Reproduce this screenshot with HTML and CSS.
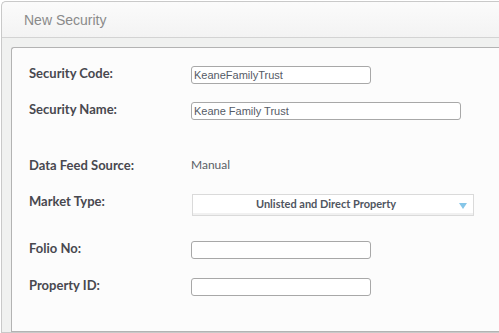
FILE: index.html
```html
<!DOCTYPE html>
<html lang="en">
<head>
    <meta charset="UTF-8">
    <meta name="viewport" content="width=device-width, initial-scale=1.0">
    <title>New Security</title>
    <link rel="stylesheet" href="styles.css">
</head>
<body>
    <div class="dialog">
        <div class="dialog-header">New Security</div>

        <div class="dialog-body">
            <div class="panel">
                <div class="form">
                    <div class="field">
                        <label for="securityCode">Security Code:</label>
                        <input type="text" id="securityCode" class="input" value="KeaneFamilyTrust">
                    </div>
                    <div class="field">
                        <label for="securityName">Security Name:</label>
                        <input type="text" id="securityName" class="input input-wide" value="Keane Family Trust">
                    </div>
                    <div class="field field-text">
                        <label>Data Feed Source:</label>
                        <span class="value">Manual</span>
                    </div>
                    <div class="field">
                        <label>Market Type:</label>
                        <div class="select">
                            Unlisted and Direct Property
                            <span class="select-arrow"></span>
                        </div>
                    </div>
                    <div class="field">
                        <label for="folioNo">Folio No:</label>
                        <input type="text" id="folioNo" class="input">
                    </div>
                    <div class="field">
                        <label for="propertyId">Property ID:</label>
                        <input type="text" id="propertyId" class="input">
                    </div>
                </div>
            </div>
        </div>
    </div>
</body>
</html>
```

FILE: styles.css
```css
body {
    margin: 0;
    background: #ffffff;
    overflow: hidden;
    font-family: Lato, "Open Sans", sans-serif;
}

.dialog {
    margin: 1px 0 0 1px;
    border: 1px solid #c9c9c9;
    border-right: none;
    border-radius: 5px 0 0 0;
    background: #f0f1f0;
}

.dialog-header {
    height: 35px;
    padding-left: 22px;
    line-height: 36px;
    font-family: "Liberation Sans", Arial, sans-serif;
    font-size: 14px;
    color: #8a8a8a;
    background: linear-gradient(#fbfbfb, #f3f3f3);
    border-bottom: 1px solid #d3d3d3;
    border-radius: 5px 0 0 0;
}

.dialog-body {
    padding: 9px 0 0 9px;
}

.panel {
    height: 283px;
    background: #fcfcfc;
    border: 1px solid #b3b3b3;
    border-right: none;
    border-radius: 3px 0 0 0;
}

.form {
    display: grid;
    grid-template-rows: 36px 54px 38px 47px 37px auto;
    padding: 18px 0 0 17px;
}

.field {
    display: flex;
    align-items: flex-start;
}

.field label {
    width: 162px;
    flex-shrink: 0;
    margin-top: -1px;
    font-size: 13px;
    font-weight: 700;
    line-height: 16px;
    color: #48484f;
}

.field-text {
    padding-top: 2px;
}

.input {
    box-sizing: border-box;
    width: 180px;
    height: 18px;
    margin: 0;
    padding: 0 2px;
    border: 1px solid #a8a8a8;
    border-radius: 3px;
    background: #ffffff;
    font-family: "Liberation Sans", Arial, sans-serif;
    font-size: 11px;
    color: #555b66;
}

.input-wide {
    width: 270px;
}

.value {
    margin-top: -1px;
    font-size: 12px;
    line-height: 16px;
    color: #5a5f66;
}

.select {
    position: relative;
    box-sizing: border-box;
    width: 282px;
    height: 22px;
    margin-left: 1px;
    padding-right: 14px;
    border: 1px solid #dadada;
    background: #ffffff;
    box-shadow: inset 0 -2px 0 #f1f1f1;
    text-align: center;
    font-size: 11px;
    font-weight: 700;
    line-height: 17px;
    color: #4f5560;
}

.select-arrow {
    position: absolute;
    right: 6px;
    top: 8px;
    width: 0;
    height: 0;
    border-left: 4px solid transparent;
    border-right: 4px solid transparent;
    border-top: 6px solid #86c6e8;
}
```
